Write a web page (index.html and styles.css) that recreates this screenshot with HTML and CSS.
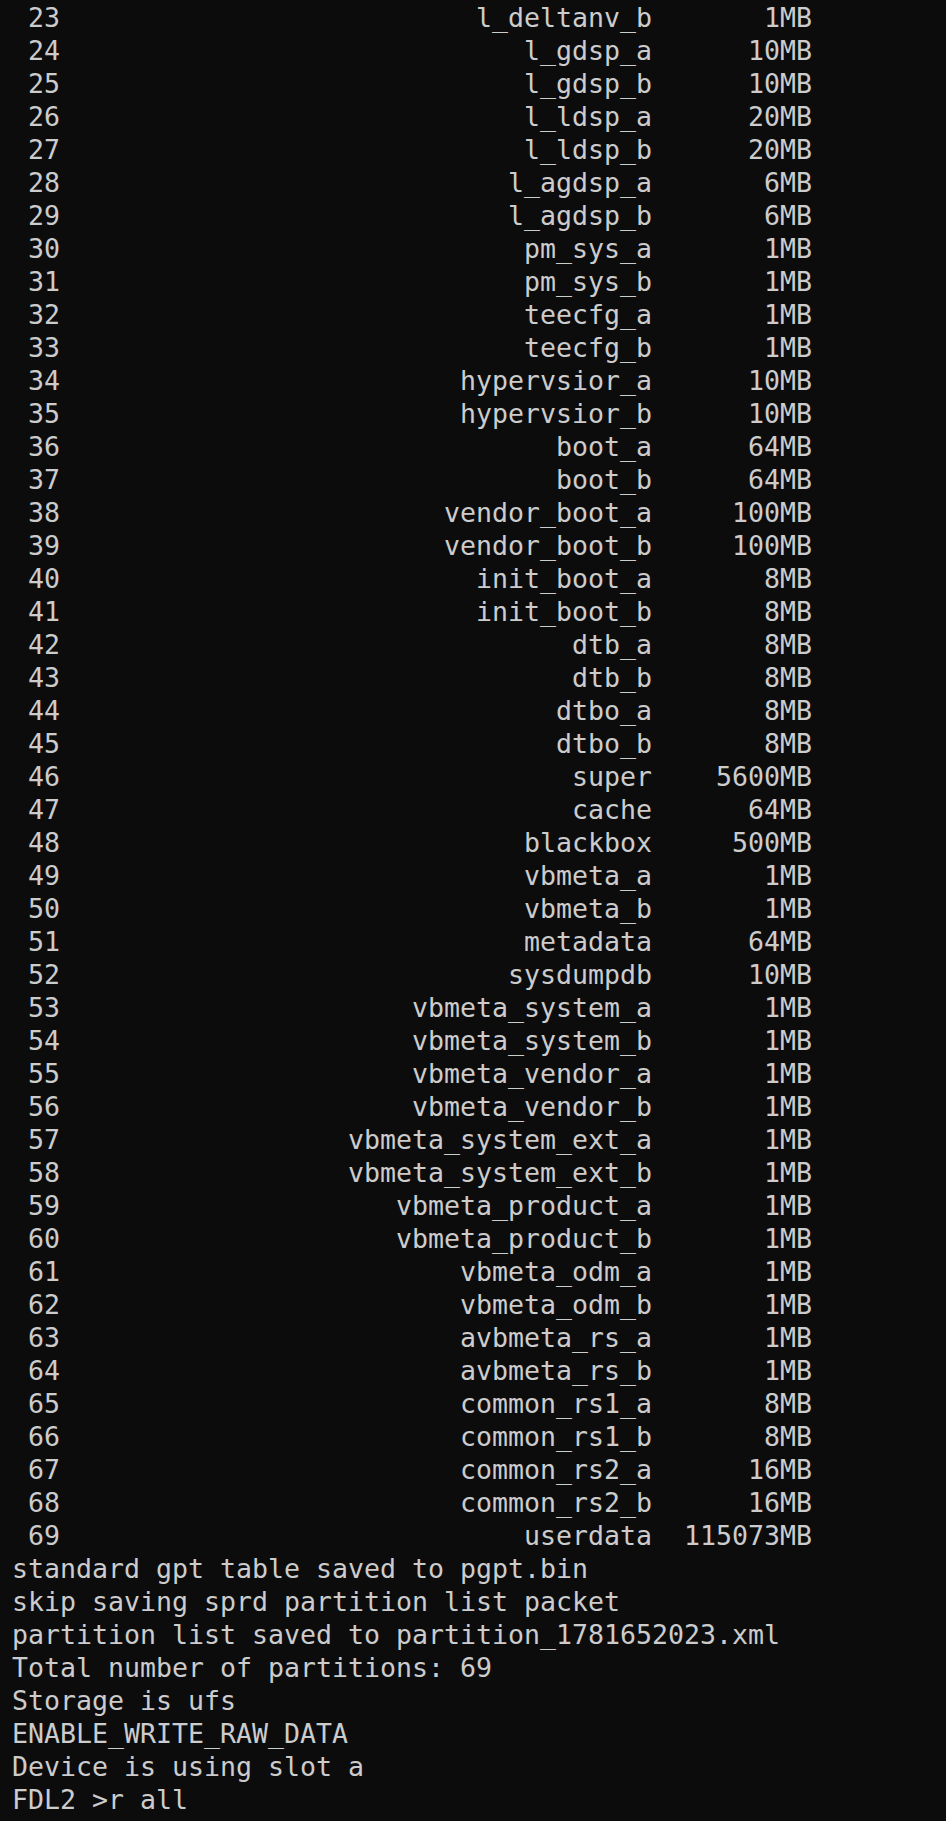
FILE: index.html
```html
<!DOCTYPE html>
<html>
<head>
<meta charset="utf-8">
<link rel="stylesheet" href="styles.css">
</head>
<body>
<main class="term">
<div class="row"><span>23</span><span>l_deltanv_b</span><span>1MB</span></div>
<div class="row"><span>24</span><span>l_gdsp_a</span><span>10MB</span></div>
<div class="row"><span>25</span><span>l_gdsp_b</span><span>10MB</span></div>
<div class="row"><span>26</span><span>l_ldsp_a</span><span>20MB</span></div>
<div class="row"><span>27</span><span>l_ldsp_b</span><span>20MB</span></div>
<div class="row"><span>28</span><span>l_agdsp_a</span><span>6MB</span></div>
<div class="row"><span>29</span><span>l_agdsp_b</span><span>6MB</span></div>
<div class="row"><span>30</span><span>pm_sys_a</span><span>1MB</span></div>
<div class="row"><span>31</span><span>pm_sys_b</span><span>1MB</span></div>
<div class="row"><span>32</span><span>teecfg_a</span><span>1MB</span></div>
<div class="row"><span>33</span><span>teecfg_b</span><span>1MB</span></div>
<div class="row"><span>34</span><span>hypervsior_a</span><span>10MB</span></div>
<div class="row"><span>35</span><span>hypervsior_b</span><span>10MB</span></div>
<div class="row"><span>36</span><span>boot_a</span><span>64MB</span></div>
<div class="row"><span>37</span><span>boot_b</span><span>64MB</span></div>
<div class="row"><span>38</span><span>vendor_boot_a</span><span>100MB</span></div>
<div class="row"><span>39</span><span>vendor_boot_b</span><span>100MB</span></div>
<div class="row"><span>40</span><span>init_boot_a</span><span>8MB</span></div>
<div class="row"><span>41</span><span>init_boot_b</span><span>8MB</span></div>
<div class="row"><span>42</span><span>dtb_a</span><span>8MB</span></div>
<div class="row"><span>43</span><span>dtb_b</span><span>8MB</span></div>
<div class="row"><span>44</span><span>dtbo_a</span><span>8MB</span></div>
<div class="row"><span>45</span><span>dtbo_b</span><span>8MB</span></div>
<div class="row"><span>46</span><span>super</span><span>5600MB</span></div>
<div class="row"><span>47</span><span>cache</span><span>64MB</span></div>
<div class="row"><span>48</span><span>blackbox</span><span>500MB</span></div>
<div class="row"><span>49</span><span>vbmeta_a</span><span>1MB</span></div>
<div class="row"><span>50</span><span>vbmeta_b</span><span>1MB</span></div>
<div class="row"><span>51</span><span>metadata</span><span>64MB</span></div>
<div class="row"><span>52</span><span>sysdumpdb</span><span>10MB</span></div>
<div class="row"><span>53</span><span>vbmeta_system_a</span><span>1MB</span></div>
<div class="row"><span>54</span><span>vbmeta_system_b</span><span>1MB</span></div>
<div class="row"><span>55</span><span>vbmeta_vendor_a</span><span>1MB</span></div>
<div class="row"><span>56</span><span>vbmeta_vendor_b</span><span>1MB</span></div>
<div class="row"><span>57</span><span>vbmeta_system_ext_a</span><span>1MB</span></div>
<div class="row"><span>58</span><span>vbmeta_system_ext_b</span><span>1MB</span></div>
<div class="row"><span>59</span><span>vbmeta_product_a</span><span>1MB</span></div>
<div class="row"><span>60</span><span>vbmeta_product_b</span><span>1MB</span></div>
<div class="row"><span>61</span><span>vbmeta_odm_a</span><span>1MB</span></div>
<div class="row"><span>62</span><span>vbmeta_odm_b</span><span>1MB</span></div>
<div class="row"><span>63</span><span>avbmeta_rs_a</span><span>1MB</span></div>
<div class="row"><span>64</span><span>avbmeta_rs_b</span><span>1MB</span></div>
<div class="row"><span>65</span><span>common_rs1_a</span><span>8MB</span></div>
<div class="row"><span>66</span><span>common_rs1_b</span><span>8MB</span></div>
<div class="row"><span>67</span><span>common_rs2_a</span><span>16MB</span></div>
<div class="row"><span>68</span><span>common_rs2_b</span><span>16MB</span></div>
<div class="row"><span>69</span><span>userdata</span><span>115073MB</span></div>
<div class="line">standard gpt table saved to pgpt.bin</div>
<div class="line">skip saving sprd partition list packet</div>
<div class="line">partition list saved to partition_1781652023.xml</div>
<div class="line">Total number of partitions: 69</div>
<div class="line">Storage is ufs</div>
<div class="line">ENABLE_WRITE_RAW_DATA</div>
<div class="line">Device is using slot a</div>
<div class="line">FDL2 &gt;r all</div>
</main>
</body>
</html>
```

FILE: styles.css
```css
html, body {
  margin: 0;
  padding: 0;
  background: #0c0c0c;
}
.term {
  background: #0c0c0c;
  color: #cccccc;
  font-family: "DejaVu Sans Mono", "Liberation Mono", monospace;
  font-size: 26.58px;
  line-height: 33px;
  padding: 1px 0 0 12px;
  height: 1821px;
  box-sizing: border-box;
  overflow: hidden;
}
.row {
  display: grid;
  grid-template-columns: 3ch 37ch 10ch;
  height: 33px;
}
.row span {
  text-align: right;
  white-space: pre;
}
.line {
  height: 33px;
  white-space: pre;
}
```
